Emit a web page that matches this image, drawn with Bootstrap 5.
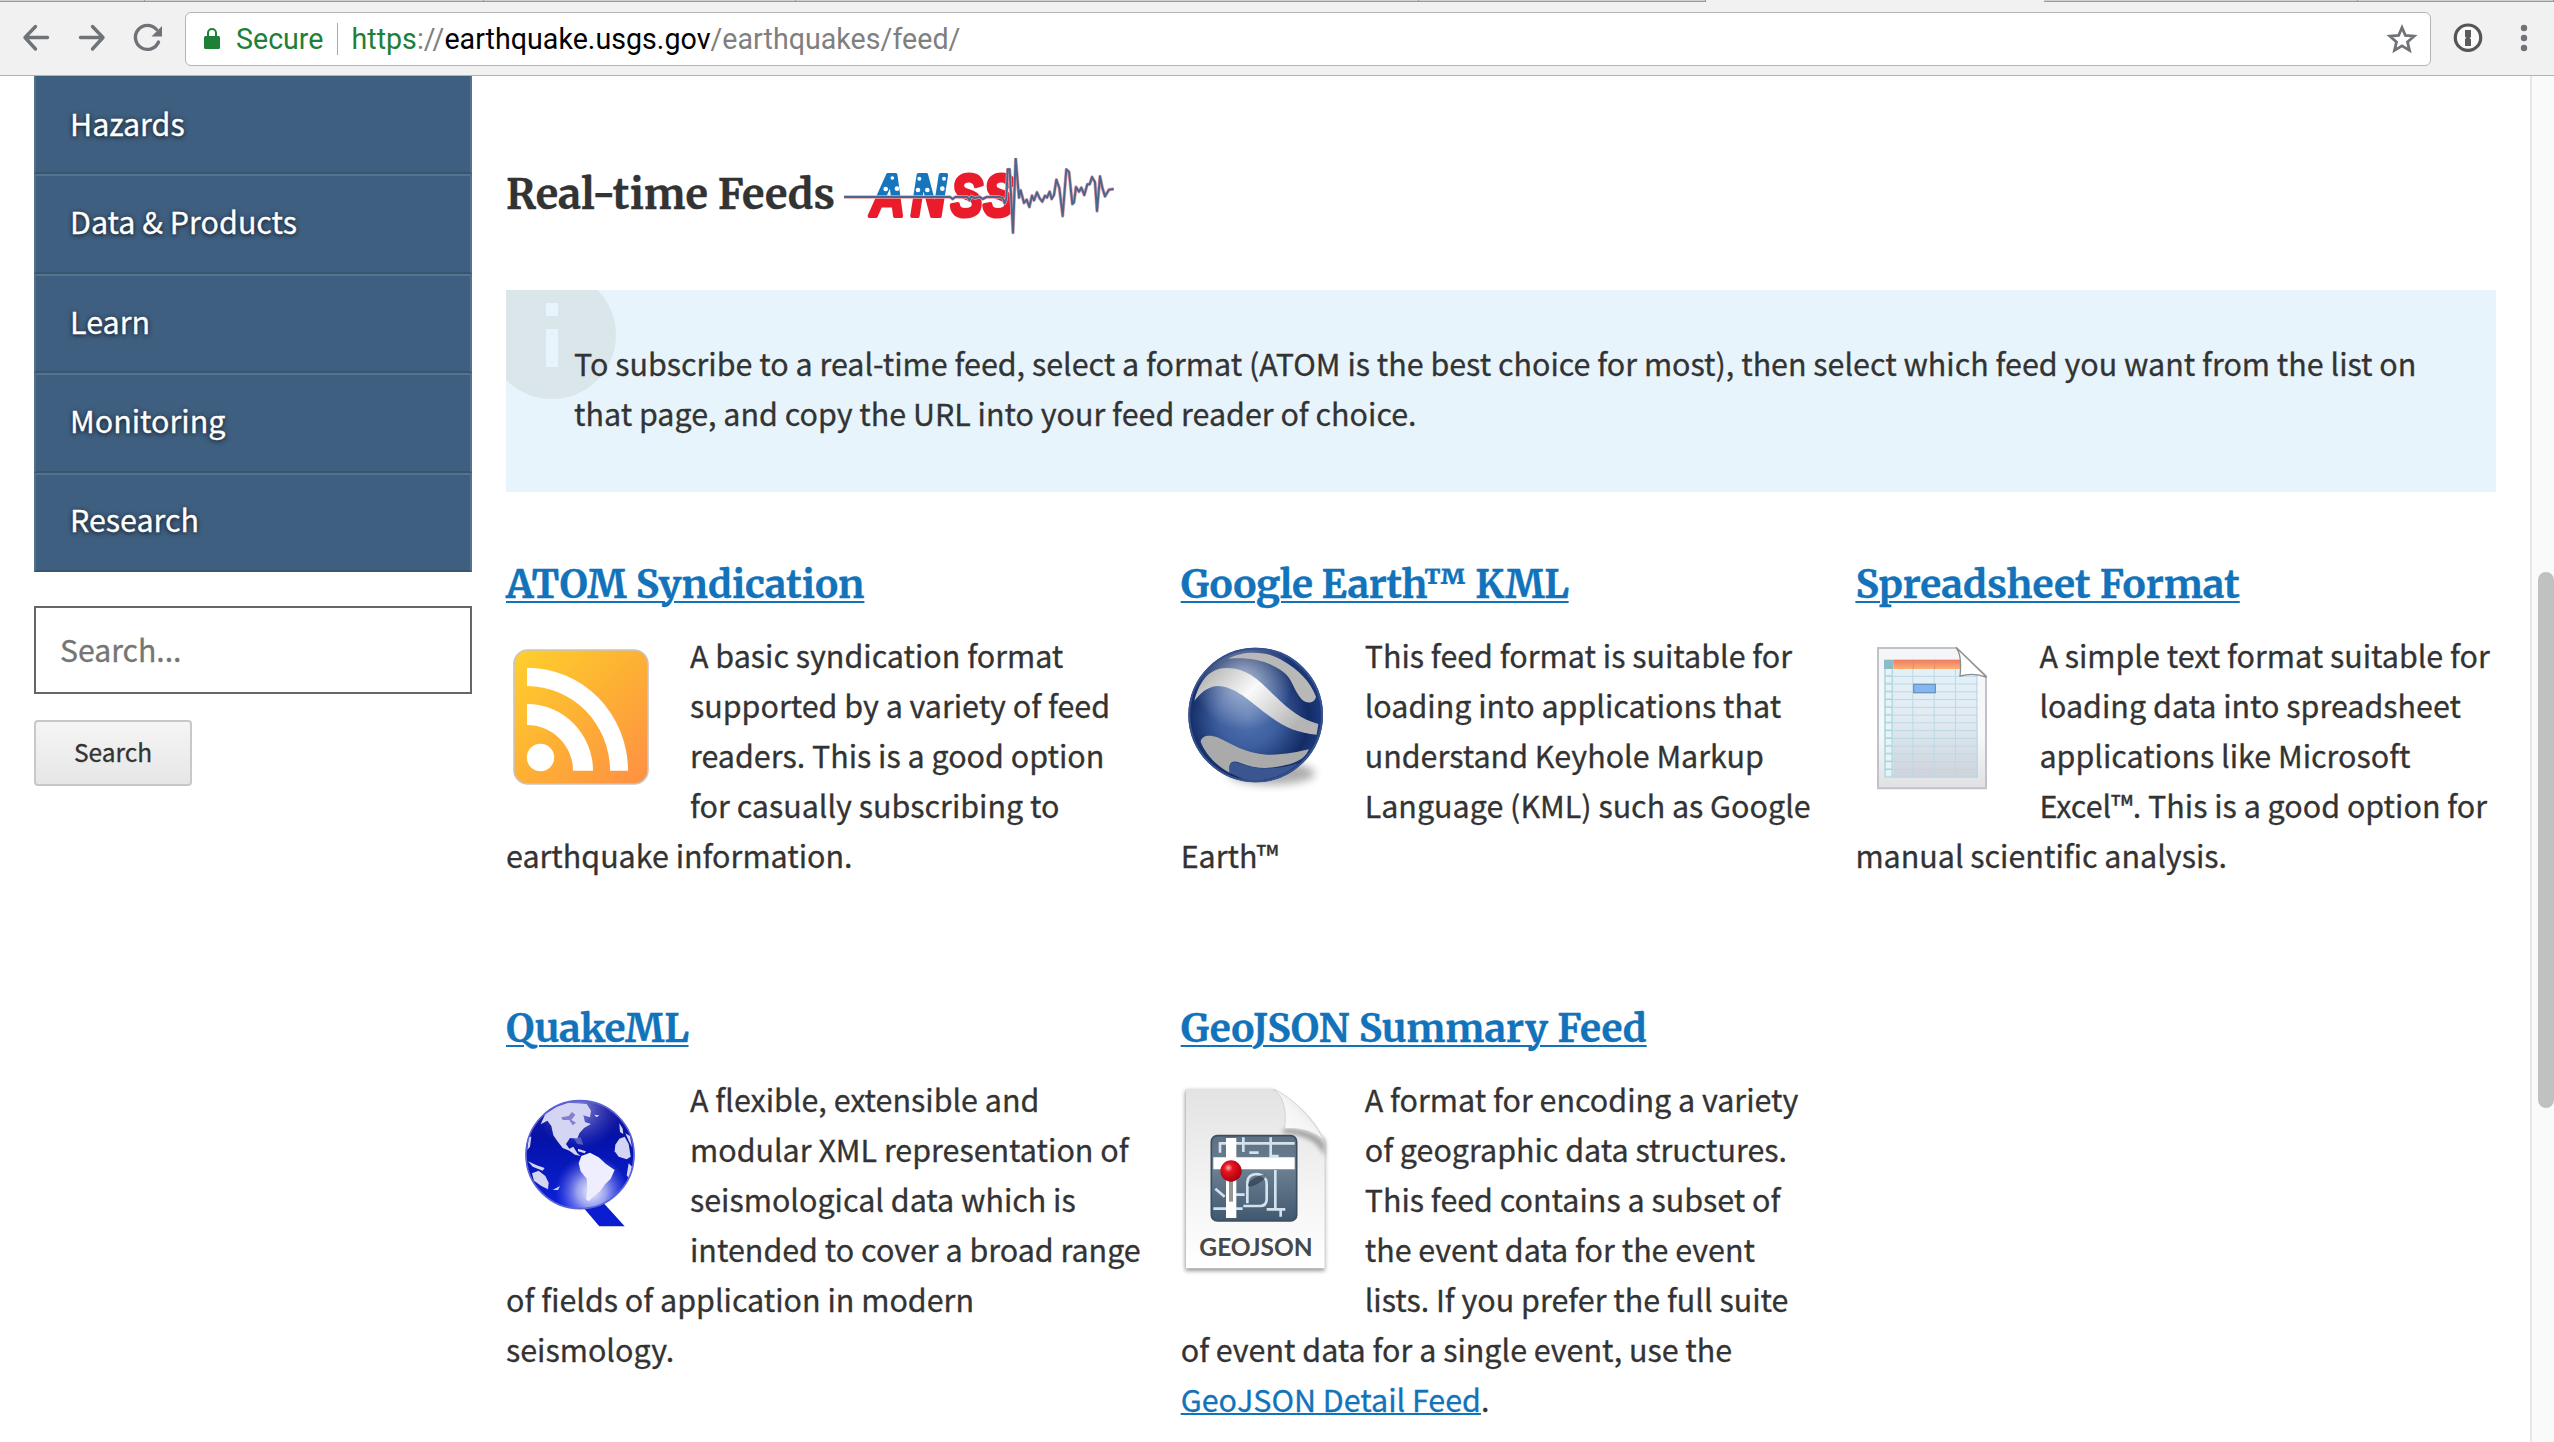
<!DOCTYPE html>
<html lang="en">
<head>
<meta charset="utf-8">
<title>Real-time Feeds</title>
<link href="https://cdn.jsdelivr.net/npm/bootstrap@5.3.0/dist/css/bootstrap.min.css" rel="stylesheet">
<script src="https://cdn.jsdelivr.net/npm/bootstrap@5.3.0/dist/js/bootstrap.bundle.min.js"></script>
<style>
html, body { height: 100%; }
body { font-family: "Noto Sans CJK SC", "Noto Sans", sans-serif; font-size: 30.44px; line-height: 50px; color: #333; background: #fff; overflow: hidden; }
.page-area { -webkit-text-stroke: .3px currentColor; }
.tabstrip { height: 2px; flex: none; display: grid; grid-template-columns: 145px 339px 312px 623px 287px 338px 314px 1fr; }
.tabstrip div { background: #d0d0d0; border-bottom: 1px solid #999; border-right: 1px solid #999; }
.tabstrip .tab-on { background: #f1f1f1; border-color: #f1f1f1; }
.browser { height: 74px; flex: none; background: #f1f1f1; border-bottom: 1px solid #b3b3b3; font-family: Roboto, sans-serif; }
.browser svg, .pic { display: block; flex: none; }
.omnibox { width: 2246px; height: 54px; margin-left: 17px; border: 1px solid #b4b4b4; border-radius: 6px; background: #fff; font-size: 28.6px; line-height: 52px; white-space: nowrap; }
.omnibox .lock { margin: 0 15px 0 17px; }
.secure { color: #1e8038; }
.url-sep { width: 1px; height: 32px; background: #aaa; margin: 0 13px 0 14px; }
.dim { color: #7f7f7f; letter-spacing: .03px; }
.page-area { height: 1366px; overflow: hidden; }
.side { width: 438px; margin-left: 34px; }
.side .list-group-item { height: 99.5px; padding: 0 34px; border: 2px solid #537391; border-bottom-color: #38566f; border-left-color: #4f6f8d; background: #3f5f80; color: #fff; line-height: 91px; text-shadow: 0 1px 5px rgba(0,0,0,.9); }
.side .list-group-item:first-child { height: 98px; border-top: 0; line-height: 95px; }
.side .list-group-item:last-child { line-height: 89px; }
.find-box { height: 88px; border: 2px solid #666; border-radius: 0; padding: 0 24px 2px; font-size: 30.2px; margin-top: 34px; }
.find-box::placeholder { color: #757575; }
.find-btn { width: 158px; height: 66px; margin-top: 26px; padding: 0 0 2px; border: 2px solid #c8c8c8; border-radius: 4px; background: linear-gradient(#f5f5f5, #e6e6e6); font-size: 24.5px; color: #333; }
.feeds { width: 1990px; margin-left: 34px; }
.title-bar { height: 214px; }
h1, h2 { font-family: Merriweather, "DejaVu Serif Condensed", serif; font-weight: 700; margin: 0; white-space: nowrap; }
h1 { font-size: 41.5px; line-height: 52px; margin-top: 92px; color: #333; }
.anss { margin: 82px 0 0 9px; }
h2 { font-size: 38.85px; line-height: 50px; position: relative; top: 1px; }
.tight { letter-spacing: -.36px; }
a { color: #1273ba; text-decoration: underline; text-decoration-thickness: 2px; }
h2 a { text-underline-offset: 3px; }
.note { height: 202px; padding: 48px 68px 0; margin-bottom: 67px; background: #e7f4fb; border: 0; border-radius: 0; color: #333; white-space: nowrap; }
.note svg { position: absolute; left: 0; top: 0; }
.note p { position: relative; }
.feed-grid { display: grid; grid-template-columns: 641px 641px 641px; column-gap: 33.7px; grid-auto-rows: 444px; }
.feed p { margin: 21px 0 0; white-space: nowrap; }
.feed .pic { float: left; margin: 12px 34px 0 0; }
.scroller { width: 24px; background: #fafafa; border-left: 2px solid #e7e7e7; }
.thumb { width: 16px; height: 536px; margin: 496px 0 0 6px; border-radius: 8px; background: #c1c1c1; }
</style>
</head>
<body class="d-flex flex-column">
<div class="tabstrip">
  <div></div><div></div><div></div><div></div><div></div><div class="tab-on"></div><div></div><div></div>
</div>
<header class="browser d-flex align-items-center">
  <svg width="168" height="74" viewBox="0 0 168 74" fill="none" stroke="#6f7378" stroke-width="3.4" stroke-linecap="round" stroke-linejoin="round">
    <path d="M47.500 35.500H25M35.500 24.500 25 35.500l10.500 11.500M80.500 35.500H103M92.500 24.500l10.500 11-10.500 11.500"/>
    <path d="M158.500 40A12 12 0 1 1 156.500 27.500"/>
    <path d="M162 24v10.500h-10.500z" fill="#6f7378" stroke="none"/>
  </svg>
  <div class="omnibox d-flex align-items-center">
    <svg class="lock" width="18" height="24" viewBox="0 0 18 24"><rect x="1" y="9" width="16" height="13" rx="1.500" fill="#1e8038"/><path d="M5 10V6a4 4 0 0 1 8 0v4" fill="none" stroke="#1e8038" stroke-width="2"/></svg>
    <span class="secure">Secure</span>
    <span class="url-sep"></span>
    <span class="dim"><span class="secure">https</span>://<span class="text-black">earthquake.usgs.gov</span>/earthquakes/feed/</span>
    <svg class="ms-auto me-2" width="40" height="40" viewBox="0 0 40 40"><path d="M20 8.500l3.400 8 8.700.7-6.600 5.700 2 8.500-7.500-4.500-7.500 4.500 2-8.500-6.600-5.700 8.700-.7z" fill="none" stroke="#6f7378" stroke-width="2.800"/></svg>
  </div>
  <svg width="120" height="74" viewBox="0 0 120 74"><circle cx="37" cy="35.700" r="12.700" fill="#fafafa" stroke="#555" stroke-width="3.200"/><path d="M34 28h6v7l-1.300 1 1.300 1.500v6.500h-6v-7l1.300-1-1.300-1.500z" fill="#5c5c5c"/><g fill="#6f7378"><circle cx="93" cy="26" r="3.200"/><circle cx="93" cy="36" r="3.200"/><circle cx="93" cy="46" r="3.200"/></g></svg>
</header>
<div class="page-area d-flex">
  <aside class="side flex-shrink-0">
    <nav class="list-group rounded-0">
      <a class="list-group-item text-decoration-none" href="#">Hazards</a>
      <a class="list-group-item text-decoration-none" href="#">Data &amp; Products</a>
      <a class="list-group-item text-decoration-none" href="#">Learn</a>
      <a class="list-group-item text-decoration-none" href="#">Monitoring</a>
      <a class="list-group-item text-decoration-none" href="#">Research</a>
    </nav>
    <input class="form-control find-box" placeholder="Search...">
    <button class="btn find-btn d-block">Search</button>
  </aside>
  <main class="feeds flex-shrink-0">
    <div class="title-bar d-flex align-items-start">
      <h1>Real-time Feeds</h1>
      <svg class="anss" width="272" height="78" viewBox="42 54 816 234">
        <defs>
          <linearGradient id="flag" gradientUnits="userSpaceOnUse" x1="0" y1="100" x2="0" y2="233"><stop offset=".54" stop-color="#1675bd"/><stop offset=".54" stop-color="#ea1c2b"/></linearGradient>
          <path id="wave" d="M42 171H360l8 6 8-6h36l6 10 6-12 10 5 16-3 8 6 12-6h38l10 3 6 16 5-14 4-88 6 0 10 190 8-224 10 119 5-22 10 38 8-10 8 22 8-34 6 14 9-24 8 18 8 10 8-18 6 6 8-18 6 22 7-12 7-46 9 25 10 84 11-140 8 8 10 96 5-5 6-46 9 14 7-12 9 22 9-32 7 0 7-22 9 16 6 86 9-104 7 34 8 26 12-20 14-2"/>
        </defs>
        <g font-family="Liberation Sans, sans-serif" font-weight="700" font-style="italic" font-size="180" stroke-width="12" stroke-linejoin="round">
          <text transform="scale(.8 1)" x="151 304" y="228" fill="url(#flag)" stroke="url(#flag)">AN</text>
          <text transform="scale(.8 1)" x="453 575" y="227" fill="#ea1c2b" stroke="#ea1c2b">SS</text>
        </g>
        <g fill="#fff"><circle cx="187" cy="114" r="5.500"/><circle cx="167" cy="147" r="7"/><circle cx="201" cy="146" r="7"/><circle cx="268" cy="116" r="6"/><circle cx="264" cy="150" r="7"/><circle cx="292" cy="150" r="7"/><circle cx="342" cy="116" r="6"/><circle cx="337" cy="146" r="7"/></g>
        <g fill="none" stroke-linejoin="round"><use href="#wave" stroke="#e9a0a8" stroke-width="10"/><use href="#wave" stroke="#48678f" stroke-width="6"/></g>
      </svg>
    </div>
    <div class="alert note position-relative">
      <svg width="110" height="109" viewBox="0 0 110 109"><circle cx="46" cy="45" r="64" fill="#dbe6eb"/><path d="M40 13h12v13H40zM40 39h12v38H40z" fill="#e7f4fb"/></svg>
      <p class="m-0">To subscribe to a real-time feed, select a format (ATOM is the best choice for most), then select which feed you want from the list on<br>that page, and copy the URL into your feed reader of choice.</p>
    </div>
    <div class="feed-grid">
      <section class="feed">
        <h2><a href="#">ATOM Syndication</a></h2>
        <p><svg class="pic" width="150" height="150" viewBox="0 0 150 150">
          <defs><linearGradient id="rss" x1="0" y1="0" x2="1" y2="1"><stop offset="0" stop-color="#ffd02c"/><stop offset=".5" stop-color="#fdb034"/><stop offset="1" stop-color="#ff8f45"/></linearGradient></defs>
          <rect x="8" y="8" width="134" height="134" rx="14" fill="url(#rss)" stroke="#c9c4bd" stroke-width="1.600"/>
          <g fill="#fff"><path d="M21 25.700A101 103 0 0 1 122 128.700H104A83 84.700 0 0 0 21 44zM21 62A66 66.700 0 0 1 87 128.700H67A46 45.700 0 0 0 21 83z"/><circle cx="34.500" cy="115.500" r="13.700"/></g>
        </svg>A basic syndication format<br>supported by a variety of feed<br>readers. This is a good option<br>for casually subscribing to<br>earthquake information.</p>
      </section>
      <section class="feed">
        <h2 class="tight"><a href="#">Google Earth™ KML</a></h2>
        <p><svg class="pic" width="150" height="150" viewBox="63 306 450 450">
          <defs>
            <radialGradient id="sea" gradientUnits="userSpaceOnUse" cx="265" cy="530" r="225"><stop offset="0" stop-color="#5474b0"/><stop offset=".4" stop-color="#3d5f9f"/><stop offset=".8" stop-color="#132c66"/><stop offset="1" stop-color="#1e3c80"/></radialGradient>
            <linearGradient id="band" x1="0" y1="0" x2="1" y2=".5"><stop offset="0" stop-color="#a5a5a5"/><stop offset=".5" stop-color="#fafafa"/><stop offset="1" stop-color="#b5b5b5"/></linearGradient>
            <radialGradient id="shine" gradientUnits="userSpaceOnUse" cx="250" cy="420" r="150"><stop offset="0" stop-color="#fff" stop-opacity=".6"/><stop offset="1" stop-color="#fff" stop-opacity="0"/></radialGradient>
            <filter id="soft" x="-30%" y="-60%" width="160%" height="220%"><feGaussianBlur stdDeviation="12"/></filter>
            <clipPath id="globe"><circle cx="287" cy="525" r="199"/></clipPath>
          </defs>
          <ellipse cx="335" cy="700" rx="130" ry="34" fill="#777" opacity=".6" filter="url(#soft)"/>
          <circle cx="287" cy="525" r="202" fill="url(#sea)"/>
          <g clip-path="url(#globe)">
            <circle cx="250" cy="420" r="150" fill="url(#shine)"/>
            <path d="M103 482C120 420 150 384 200 384 265 384 300 425 345 468 390 512 425 538 475 552L470 584C415 580 370 562 320 522 270 485 225 438 172 438 140 440 120 462 103 482z" fill="url(#band)"/>
            <path d="M205 356C250 332 320 332 365 360 420 392 450 425 468 470 462 492 440 492 425 478 400 450 400 420 370 396 325 362 270 350 205 356z" fill="#b8b8b8"/>
            <path d="M122 605C125 585 150 583 172 592 215 612 255 640 320 644 370 646 415 635 447 628 435 655 415 668 365 678 320 688 280 685 240 668 215 658 202 668 212 700 170 680 135 640 122 605z" fill="#aaa"/>
            <path d="M208 698C204 660 222 664 250 674 305 692 360 686 415 670 370 715 300 728 250 718z" fill="#3a5590"/>
          </g>
          <circle cx="287" cy="525" r="199" fill="none" stroke="#37538f" stroke-width="6"/>
        </svg>This feed format is suitable for<br>loading into applications that<br>understand Keyhole Markup<br>Language (KML) such as Google<br>Earth™</p>
      </section>
      <section class="feed">
        <h2><a href="#">Spreadsheet Format</a></h2>
        <p><svg class="pic" width="150" height="150" viewBox="45 306 450 450">
          <defs>
            <linearGradient id="sheet" x1="0" y1="0" x2="0" y2="1"><stop offset="0" stop-color="#f3f5f6"/><stop offset=".6" stop-color="#f6f8f9"/><stop offset="1" stop-color="#dfe1e3"/></linearGradient>
            <linearGradient id="cells" x1="0" y1="0" x2="0" y2="1"><stop offset="0" stop-color="#e4f0f8"/><stop offset=".45" stop-color="#e2ebf2"/><stop offset="1" stop-color="#cdd3da"/></linearGradient>
            <linearGradient id="head" x1="0" y1="0" x2="0" y2="1"><stop offset="0" stop-color="#ee7a62"/><stop offset="1" stop-color="#fdb072"/></linearGradient>
            <pattern id="lines" x="156" y="387" width="64" height="23.300" patternUnits="userSpaceOnUse"><path d="M62.500 0V23.300M0 22H64" stroke="#b9d9e4" stroke-width="3" fill="none"/></pattern>
            <pattern id="nums" x="132" y="387" width="28" height="23.300" patternUnits="userSpaceOnUse"><rect width="28" height="23.300" fill="#e9f2f5"/><path d="M3 0V23.300M25 0V23.300M2 21H26" stroke="#a3d3e0" stroke-width="4" fill="none"/></pattern>
          </defs>
          <path d="M114 324H348L438 408V745H114z" fill="url(#sheet)" stroke="#bfc3c9" stroke-width="6"/>
          <rect x="160" y="387" width="254" height="326" fill="url(#cells)"/><rect x="160" y="387" width="254" height="326" fill="url(#lines)"/>
          <rect x="132" y="387" width="28" height="326" fill="url(#nums)"/><rect x="132" y="359" width="28" height="28" fill="#8bbcc6"/>
          <rect x="160" y="359" width="204" height="28" fill="url(#head)"/><path d="M220 359v28M284 359v28" stroke="#e58a68" stroke-width="3"/>
          <rect x="221" y="433" width="65" height="25" fill="#85b6f3" stroke="#6d94bd" stroke-width="4"/>
          <path d="M348 322C363 340 364 370 360 408 390 400 415 402 440 412z" fill="#fff" stroke="#8b8d90" stroke-width="4"/>
        </svg>A simple text format suitable for<br>loading data into spreadsheet<br>applications like Microsoft<br>Excel™. This is a good option for<br>manual scientific analysis.</p>
      </section>
      <section class="feed">
        <h2 class="tight"><a href="#">QuakeML</a></h2>
        <p><svg class="pic" width="150" height="150" viewBox="48 288 450 450">
          <defs>
            <linearGradient id="deep" x1="0" y1="0" x2="0" y2="1"><stop offset="0" stop-color="#1a1a98"/><stop offset=".35" stop-color="#0512a8"/><stop offset="1" stop-color="#0a22dc"/></linearGradient>
            <radialGradient id="glow" gradientUnits="userSpaceOnUse" cx="305" cy="605" r="110"><stop offset="0" stop-color="#fff" stop-opacity=".95"/><stop offset=".4" stop-color="#e6e6ff" stop-opacity=".65"/><stop offset="1" stop-color="#8080ff" stop-opacity="0"/></radialGradient>
            <radialGradient id="haze" gradientUnits="userSpaceOnUse" cx="265" cy="355" r="125"><stop offset="0" stop-color="#9a9adf" stop-opacity=".9"/><stop offset="1" stop-color="#5050c0" stop-opacity="0"/></radialGradient>
            <clipPath id="orb"><circle cx="270" cy="494" r="163"/></clipPath>
          </defs>
          <path d="M278 650L328 709H404L338 636z" fill="#0a1dd0"/>
          <circle cx="270" cy="494" r="163" fill="url(#deep)"/>
          <g clip-path="url(#orb)">
            <circle cx="265" cy="355" r="125" fill="url(#haze)"/><circle cx="305" cy="605" r="110" fill="url(#glow)"/>
            <g fill="#d4d4f3">
              <path d="M152 403L166 372 200 350 235 338 290 342 303 362 300 382 280 376 285 396 303 402 282 414 268 430 262 446 240 444 228 462 238 476 250 470 262 490 272 498 255 494 238 482 218 474 204 456 190 436 184 408 172 392z"/>
              <path d="M274 498L300 488 326 502 348 522 374 540 362 566 346 582 330 604 310 620 296 634 288 628 292 600 290 566 272 544 266 520z" fill="#eeeeff"/>
              <path d="M388 446L404 440 416 462 422 500 410 508 386 500 374 484 376 464z"/>
              <path d="M388 400l10 16 2 16-10-6zM406 430l14 8 6 34-10-20zM416 520l10 10-8 36-8-10z"/>
              <path d="M126 550l20-8 20 16 10 20-2 20-20-10-22-16zM114 514l26 12 24 8-6 8-30-12zM116 440l8 0-4 30-8 10zM188 600l22-12-6 12zM264 476l24 8-4 6-20-6zM312 374l16 2-8 6z"/>
            </g>
            <path d="M214 382l22-4 10-12 10 8-12 16 14 8-10 8-10-16-20 0zM252 446l20-4 8 22-18-2z" fill="#6a6ac6" opacity=".8"/>
          </g>
          <circle cx="270" cy="494" r="162" fill="none" stroke="#5d62d8" stroke-width="5"/>
        </svg>A flexible, extensible and<br>modular XML representation of<br>seismological data which is<br>intended to cover a broad range<br>of fields of application in modern<br>seismology.</p>
      </section>
      <section class="feed">
        <h2><a href="#">GeoJSON Summary Feed</a></h2>
        <p><svg class="pic" width="150" height="190" viewBox="63 78 450 570">
          <defs>
            <linearGradient id="paper" x1="0" y1="0" x2="0" y2="1"><stop offset="0" stop-color="#e3e3e3"/><stop offset=".6" stop-color="#f5f5f5"/><stop offset="1" stop-color="#fff"/></linearGradient>
            <linearGradient id="map" x1="0" y1="0" x2="0" y2="1"><stop offset="0" stop-color="#5d7183"/><stop offset=".4" stop-color="#6b7f92"/><stop offset="1" stop-color="#40586f"/></linearGradient>
            <linearGradient id="curl" x1="0" y1="1" x2="1" y2="0"><stop offset="0" stop-color="#fff"/><stop offset=".5" stop-color="#f4f4f4"/><stop offset="1" stop-color="#ccc"/></linearGradient>
            <radialGradient id="pin" cx=".38" cy=".35" r=".65"><stop offset="0" stop-color="#ffb0b0"/><stop offset=".3" stop-color="#e81522"/><stop offset="1" stop-color="#a8000c"/></radialGradient>
            <filter id="drop" x="-10%" y="-10%" width="120%" height="120%"><feGaussianBlur stdDeviation="6"/></filter>
          </defs>
          <path d="M76 92H340L494 240V632H76z" fill="#777" opacity=".8" filter="url(#drop)"/>
          <path d="M90 88H335C400 110 480 190 494 245V625H78V100Q78 88 90 88z" fill="url(#paper)"/>
          <path d="M375 205C430 205 480 225 494 250V290C470 240 430 225 365 220z" fill="#777" opacity=".6" filter="url(#drop)"/>
          <path d="M340 88C372 110 380 150 374 206 420 202 465 215 490 240 470 190 400 110 340 88z" fill="url(#curl)" stroke="#c4c4c4" stroke-width="2"/>
          <rect x="154" y="227" width="256" height="256" rx="18" fill="url(#map)" stroke="#3b4e60" stroke-width="5"/>
          <g fill="none" stroke="#d3e2ee" stroke-width="8"><path d="M180 278V250H404M250 232V276M268 278h28M332 232v56h24M346 330v116M320 448h56M362 448v22M160 446h88M166 386l28 24M228 404h26M262 430V366Q264 342 292 342 320 346 320 372V420Q318 438 300 438H250"/></g>
          <ellipse cx="290" cy="362" rx="30" ry="10" fill="#253545" opacity=".6" transform="rotate(-30 290 362)"/>
          <path d="M160 292H404V328H160zM198 234H229V474H198z" fill="#fff"/>
          <path d="M207 355h12v70h-12z" fill="#969696"/>
          <circle cx="213" cy="333" r="32" fill="url(#pin)"/>
          <text x="118" y="588" textLength="340" lengthAdjust="spacingAndGlyphs" font-family="Lato, sans-serif" font-weight="700" font-size="74" fill="#484848">GEOJSON</text>
        </svg>A format for encoding a variety<br>of geographic data structures.<br>This feed contains a subset of<br>the event data for the event<br>lists. If you prefer the full suite<br>of event data for a single event, use the<br><a href="#">GeoJSON Detail Feed</a>.</p>
      </section>
    </div>
  </main>
  <div class="scroller ms-auto"><div class="thumb"></div></div>
</div>
</body>
</html>
